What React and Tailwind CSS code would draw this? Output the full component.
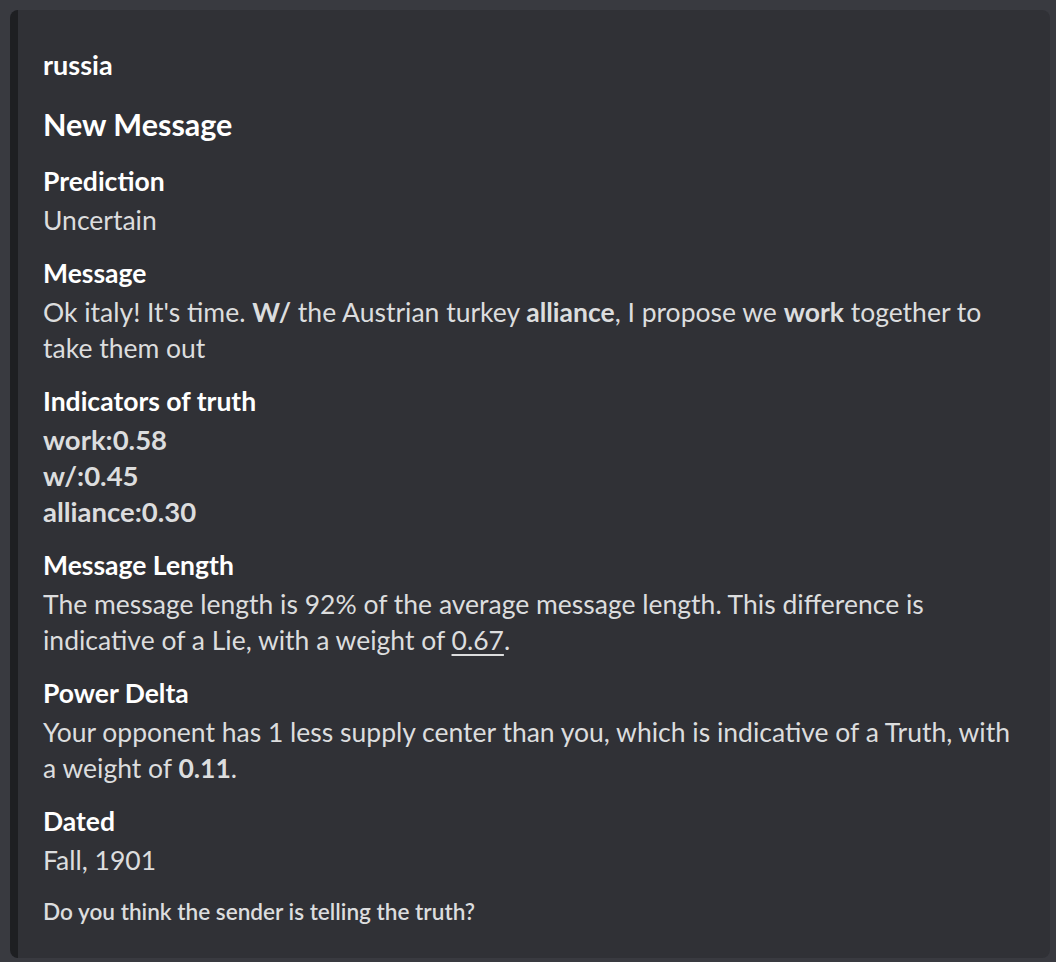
import React from 'react';

const fields = [
  { name: 'Prediction', value: <>Uncertain</> },
  {
    name: 'Message',
    value: (
      <>
        Ok italy! It's time. <b className="font-bold">W/</b> the Austrian turkey{' '}
        <b className="font-bold">alliance</b>, I propose we <b className="font-bold">work</b> together to
        take them out
      </>
    ),
  },
  {
    name: 'Indicators of truth',
    value: (
      <div className="font-bold text-[27.5px]">
        <div>work:0.58</div>
        <div>w/:0.45</div>
        <div>alliance:0.30</div>
      </div>
    ),
  },
  {
    name: 'Message Length',
    value: (
      <>
        The message length is 92% of the average message length. This difference is indicative of a Lie,
        with a weight of <span className="underline underline-offset-4">0.67</span>.
      </>
    ),
  },
  {
    name: 'Power Delta',
    value: (
      <>
        Your opponent has 1 less supply center than you, which is indicative of a Truth, with a weight of{' '}
        <b className="font-bold">0.11</b>.
      </>
    ),
  },
  { name: 'Dated', value: <>Fall, 1901</> },
];

export default function App() {
  return (
    <div
      className="w-[1056px] h-[962px] bg-[#393a40] pt-[10px] pl-[10px] overflow-hidden"
      style={{ fontFamily: 'Lato, "Noto Sans", sans-serif' }}
    >
      <div className="w-[1040px] h-[948px] bg-[#303136] rounded-[8px] border-l-[8px] border-[#1e1f22] pl-[25px] pr-[25px] pt-[40px]">
        <div className="text-[27px] leading-[30px] font-bold text-white">russia</div>
        <div className="mt-[26px] text-[30.5px] leading-[36px] font-bold text-white">New Message</div>
        <div className="mt-[18px] flex flex-col gap-[14px]">
          {fields.map((f) => (
            <div key={f.name}>
              <div className="text-[26.5px] leading-[42px] font-bold text-white">{f.name}</div>
              <div className="text-[26.5px] leading-[36px] text-[#dcddde]">{f.value}</div>
            </div>
          ))}
        </div>
        <div className="mt-[20px] text-[22.6px] leading-[28px] font-semibold text-[#dcddde]">
          Do you think the sender is telling the truth?
        </div>
      </div>
    </div>
  );
}
